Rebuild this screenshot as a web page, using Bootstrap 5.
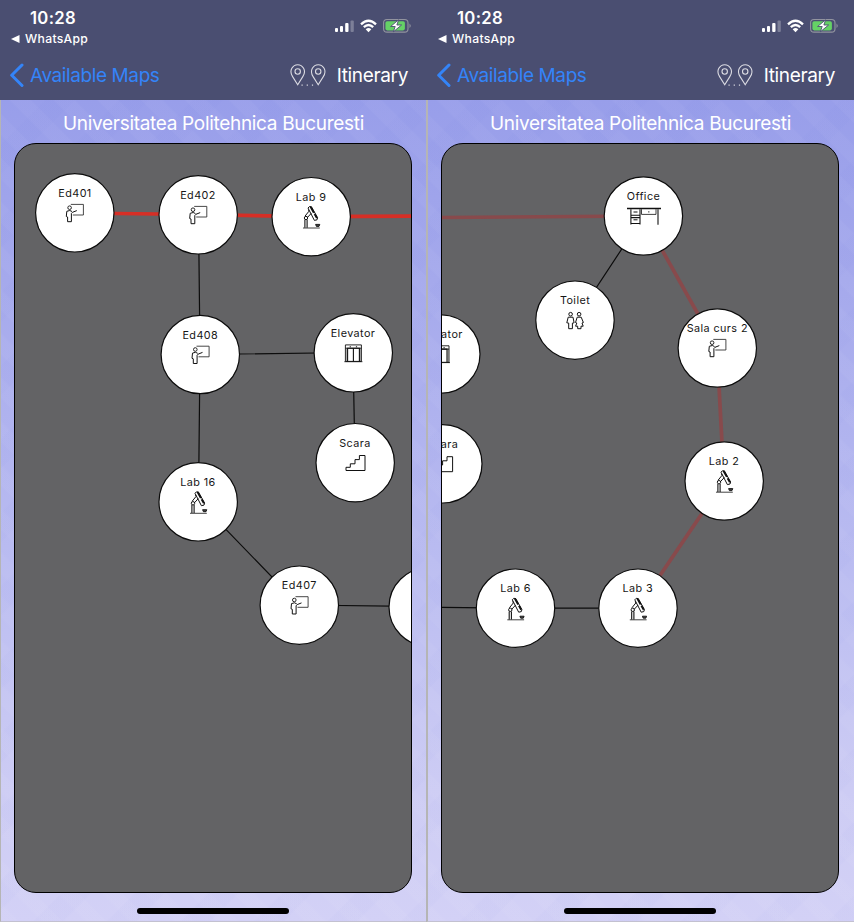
<!DOCTYPE html>
<html lang="en">
<head>
<meta charset="utf-8">
<meta name="viewport" content="width=device-width, initial-scale=1">
<title>Itinerary map</title>
<link href="https://cdn.jsdelivr.net/npm/bootstrap@5.3.0/dist/css/bootstrap.min.css" rel="stylesheet">
<style>
body { font-family: Inter, "Liberation Sans", sans-serif; width: 854px; height: 922px; overflow: hidden; }
.phone { width: 427px; height: 922px; background:
  repeating-linear-gradient(45deg, rgba(255,255,255,.035) 0 13px, transparent 15px 29px, rgba(255,255,255,.035) 31px),
  repeating-linear-gradient(135deg, rgba(70,90,210,.02) 0 19px, transparent 21px 50px, rgba(70,90,210,.02) 52px),
  linear-gradient(#989eea 100px, #a5a9ec 280px, #babcf1 560px, #cdccf4 790px, #d3d1f6 922px); }
.phone-body { border-left: 1px solid #b5b5b5; border-bottom: 1px solid #c3c1d0; height: 822px; padding: 0 14px 0 13px; }
.phone + .phone .phone-body { box-shadow: -1px 0 #b5b5b5; }
.topbar { height: 100px; background: #4a4e71; }
.status { height: 50px; padding: 8px 15px 0 11px; }
.clock { font-size: 16.7px; line-height: 20px; font-weight: 600; padding-left: 19px; letter-spacing: .3px; }
.back-app { font-size: 12.2px; line-height: 18px; letter-spacing: .3px; margin-top: 2px; font-weight: 450; gap: 5px; }
.navline { height: 50px; padding: 1px 19px 0 9px; font-size: 19px; }
.navline a { color: #3484f8; gap: 6px; }
.navline span { padding-top: 2px; }
.back-label { letter-spacing: -.4px; }
.itin-label { letter-spacing: -.35px; }
.pins { margin-right: 9px; }
.place { height: 43px; padding-top: 6px; font-size: 19px; letter-spacing: -.31px; color: #fff; }
.map-card { width: 398px; height: 750px; border: 1px solid #000; border-radius: 22px; background: #636365; }
.map-card text { font-size: 10.8px; fill: #161616; text-anchor: middle; letter-spacing: .42px; }
.disc { fill: #fff; stroke: #0c0c0c; stroke-width: 1.2; }
.way { stroke: #0c0c0c; stroke-width: 1.2; }
.route { stroke: #d62f26; stroke-width: 3.7; }
.route-dim { stroke: #884a4c; stroke-width: 3.7; }
.ico { fill: none; stroke: #111; stroke-width: 1; }
.home-area { height: 28px; }
.home-bar { width: 152px; height: 6px; background: #000; margin-top: 15px; margin-right: 1px; }
</style>
</head>
<body class="d-flex m-0">

<svg width="0" height="0" class="position-absolute">
  <defs>
    <g id="i-class" class="ico">
      <path d="M-4-8.6H8.6V2H-2" stroke="#333" stroke-width=".9"/>
      <circle cx="-5.2" cy="-5.3" r="1.8" stroke-width=".9"/>
      <path d="M-2.8-1.5-5-2.5-8-1.7-8.5 3.5-7.2 4V8.7H-3.4V.5L-2.3-.7 2-2.4" stroke-width="1"/>
    </g>
    <g id="i-robot" class="ico">
      <path d="M-8.8 11H8" stroke-width=".8"/>
      <path d="M-6.9 10.7V2.8M-4.7 10.7V2.8" stroke-width="1.1"/>
      <circle cx="-5.8" cy="1" r="1.7" stroke-width="1"/>
      <path d="M-6.7-1-2.8-5.8-3.3-7.5M-4.5.6-.5-3.7" stroke-width="1"/>
      <path d="M-3.8-9Q-2.6-11.4-.3-10.2L5.8.8 5.2 2.8 2.6 3.4Z" stroke-width="1"/>
      <path d="M-1.4-10.4 5.1 1" stroke-width="1.9" stroke-dasharray="7 1.5"/>
      <path d="M3.8 7.4H8L7.2 9.4H4.6Z" fill="#444" stroke-width=".9"/>
    </g>
    <g id="i-lift" class="ico">
      <path d="M-8-8.5H8V8H-8ZM-9 8.3H9" stroke-width=".9"/>
      <path d="M-5.8 8V-5.2H6V8M0-5V8" stroke-width="1.1"/>
      <path d="M-8-5.2H8" stroke-width=".9"/>
      <path d="M-6.8-5V8M7-5V8" stroke-width=".4"/>
      <path d="M-3.7-6.6h1.2M2.5-6.6h1.2" stroke-width="1"/>
    </g>
    <g id="i-stairs" class="ico">
      <path d="M-9.6 7.5V4.3H-5.3V.8H-.6V-3.4H3.8V-7.5H9.4V7.5Z"/>
    </g>
    <g id="i-desk" class="ico">
      <path d="M-17-7.7H17" stroke-width="1.4"/>
      <path d="M-13.1-7V8.2M-4-7V8.2M14-7V8.5M-13-1H-4M-13 1.4H-4M-13 7.3H-4" stroke-width="1.1"/>
      <path d="M-2.5-7V-1.8H12V-7" stroke-width=".8"/>
      <path d="M-10.5-4.2h4M-10.5 3.6h4M4.2-4.3h1.2" stroke-width="1"/>
    </g>
    <g id="i-toilet" class="ico">
      <circle cx="-4.4" cy="-6.8" r="1.8"/><circle cx="4.1" cy="-6.8" r="1.8"/>
      <path d="M-6.8-3.8H-2L-.9 1.8-2.6 2.1V7.7H-6.3V2.1L-8.2 1.8Z"/>
      <path d="M2.2-3.8H6.2L8.4 1.5 7 2 8.2 5.2H6V7.7H2.7V5.2H.6L1.8 2 .5 1.5Z"/>
    </g>
    <g id="i-status" fill="#fff">
      <rect x="0" y="9" width="3" height="4" rx="1"/><rect x="5" y="7" width="3" height="6" rx="1"/>
      <rect x="10.2" y="4" width="3.3" height="9" rx="1"/><rect x="15.5" y="1.5" width="3.3" height="11.5" rx="1" opacity=".28"/>
      <g fill="none" stroke="#fff" stroke-width="2.3">
        <path d="M26 5.3Q33.5-1.8 41 5.3"/><path d="M28.8 8.2Q33.5 3.9 38.2 8.2"/>
      </g>
      <path d="M30.7 10.2Q33.5 8 36.3 10.2L33.5 13.2Z"/>
      <rect x="48.6" y=".5" width="24.4" height="12.6" rx="3.4" fill="none" stroke="#92949f" stroke-width="1.1"/>
      <rect x="50.4" y="2.2" width="19.5" height="9.2" rx="1.8" fill="#65d166"/>
      <path d="M74.5 4.5Q77 6.8 74.5 9.1Z" fill="#92949f"/>
      <path d="M63.6 .8 55.6 7.5H60.2L58.3 12.8 66.6 6H61.9Z" stroke="#4a4e71" stroke-width=".9"/>
    </g>
    <g id="i-route" fill="none" stroke="#dcdce3" stroke-width="1.1">
      <path id="pin" d="M7.7 20.7 2.6 12.6C-1.5 6.4 3 .7 7.7.7S17 6.4 12.8 12.6Z"/>
      <circle cx="7.7" cy="7.5" r="2.7"/>
      <use href="#pin" x="20.5"/><circle cx="28.2" cy="7.5" r="2.7"/>
      <path d="M11.5 21.2H26" stroke-dasharray="1.2 4" stroke-width="1.3"/>
    </g>
  </defs>
</svg>

<section class="phone flex-shrink-0">
  <header class="topbar text-white">
    <div class="status d-flex justify-content-between">
      <div>
        <div class="clock">10:28</div>
        <div class="back-app d-flex align-items-center"><svg width="9" height="8"><path d="M0 4 8.5 0V8Z" fill="#fff"/></svg><span>WhatsApp</span></div>
      </div>
      <svg class="mt-2" width="77" height="22" viewBox="0 0 77 22"><use href="#i-status" x="0" y="3"/></svg>
    </div>
    <nav class="navline d-flex justify-content-between align-items-center">
      <a href="#" class="d-flex align-items-center text-decoration-none"><svg width="15" height="25"><path d="M13 2 2.7 12.3 13 22.5" fill="none" stroke="#3484f8" stroke-width="3" stroke-linecap="round" stroke-linejoin="round"/></svg><span class="back-label">Available Maps</span></a>
      <div class="d-flex align-items-center"><svg class="pins" width="38" height="23"><use href="#i-route"/></svg><span class="itin-label">Itinerary</span></div>
    </nav>
  </header>
  <main class="phone-body">
    <div class="place d-flex align-items-center justify-content-center"><span>Universitatea Politehnica Bucuresti</span></div>
    <div class="map-card overflow-hidden">
      <svg class="d-block" width="396" height="748" viewBox="15 144 396 748">
        <path class="route" d="M75 213 198 214.5 311 216.6 412 216.2" fill="none"/>
        <g class="way"><path d="M198.5 215 200 354 198.5 501 299 605 427 606.5M200 354.5 353 352.5 355 462" fill="none"/></g>
        <circle class="disc" cx="74.8" cy="212.8" r="39.2"/><text x="75" y="196.5">Ed401</text><use href="#i-class" x="74.8" y="213"/>
        <circle class="disc" cx="198.2" cy="214.8" r="39.2"/><text x="198" y="199">Ed402</text><use href="#i-class" x="198.2" y="215"/>
        <circle class="disc" cx="311.2" cy="216.7" r="39.2"/><text x="311" y="200.7">Lab 9</text><use href="#i-robot" x="311.8" y="217"/>
        <circle class="disc" cx="200.3" cy="354.5" r="39.2"/><text x="200.3" y="338.6">Ed408</text><use href="#i-class" x="200.5" y="354.8"/>
        <circle class="disc" cx="353.3" cy="352.8" r="39.2"/><text x="353" y="336.8">Elevator</text><use href="#i-lift" x="353.4" y="353.4"/>
        <circle class="disc" cx="355.2" cy="462.7" r="39.2"/><text x="355" y="446.7">Scara</text><use href="#i-stairs" x="355.6" y="463"/>
        <circle class="disc" cx="198.2" cy="501.8" r="39.2"/><text x="198" y="485.8">Lab 16</text><use href="#i-robot" x="198.8" y="502.3"/>
        <circle class="disc" cx="299.3" cy="605.2" r="39.2"/><text x="299.3" y="589">Ed407</text><use href="#i-class" x="299.5" y="605.3"/>
        <circle class="disc" cx="428.2" cy="607" r="39.2"/>
      </svg>
    </div>
    <div class="home-area d-flex justify-content-center"><div class="home-bar rounded-pill"></div></div>
  </main>
</section>

<section class="phone flex-shrink-0">
  <header class="topbar text-white">
    <div class="status d-flex justify-content-between">
      <div>
        <div class="clock">10:28</div>
        <div class="back-app d-flex align-items-center"><svg width="9" height="8"><path d="M0 4 8.5 0V8Z" fill="#fff"/></svg><span>WhatsApp</span></div>
      </div>
      <svg class="mt-2" width="77" height="22" viewBox="0 0 77 22"><use href="#i-status" x="0" y="3"/></svg>
    </div>
    <nav class="navline d-flex justify-content-between align-items-center">
      <a href="#" class="d-flex align-items-center text-decoration-none"><svg width="15" height="25"><path d="M13 2 2.7 12.3 13 22.5" fill="none" stroke="#3484f8" stroke-width="3" stroke-linecap="round" stroke-linejoin="round"/></svg><span class="back-label">Available Maps</span></a>
      <div class="d-flex align-items-center"><svg class="pins" width="38" height="23"><use href="#i-route"/></svg><span class="itin-label">Itinerary</span></div>
    </nav>
  </header>
  <main class="phone-body">
    <div class="place d-flex align-items-center justify-content-center"><span>Universitatea Politehnica Bucuresti</span></div>
    <div class="map-card overflow-hidden">
      <svg class="d-block" width="396" height="748" viewBox="442 144 396 748">
        <path class="route-dim" d="M441 217.5 643 216 717 348 724 481 638 608" fill="none"/>
        <g class="way"><path d="M643.5 216 575 320M441 607.3 515 608.2H638" fill="none"/></g>
        <circle class="disc" cx="643.4" cy="216" r="39.2"/><text x="643.5" y="200">Office</text><use href="#i-desk" x="644" y="216.2"/>
        <circle class="disc" cx="575" cy="320.2" r="39.2"/><text x="575" y="304.2">Toilet</text><use href="#i-toilet" x="575" y="321"/>
        <circle class="disc" cx="717.3" cy="348" r="39.2"/><text x="717.3" y="332">Sala curs 2</text><use href="#i-class" x="717.3" y="348"/>
        <circle class="disc" cx="724.2" cy="481" r="39.2"/><text x="724" y="465">Lab 2</text><use href="#i-robot" x="724.8" y="481.2"/>
        <circle class="disc" cx="638" cy="608.2" r="39.2"/><text x="637.7" y="592.2">Lab 3</text><use href="#i-robot" x="638.6" y="608.8"/>
        <circle class="disc" cx="515.5" cy="608.2" r="39.2"/><text x="515.5" y="592.2">Lab 6</text><use href="#i-robot" x="516.1" y="608.8"/>
        <circle class="disc" cx="440.8" cy="354" r="39.2"/><text x="440.5" y="338">Elevator</text><use href="#i-lift" x="441" y="354.3"/>
        <circle class="disc" cx="442.8" cy="463.8" r="39.2"/><text x="442.5" y="447.8">Scara</text><use href="#i-stairs" x="443.2" y="464.2"/>
      </svg>
    </div>
    <div class="home-area d-flex justify-content-center"><div class="home-bar rounded-pill"></div></div>
  </main>
</section>

<script src="https://cdn.jsdelivr.net/npm/bootstrap@5.3.0/dist/js/bootstrap.bundle.min.js"></script>
</body>
</html>
